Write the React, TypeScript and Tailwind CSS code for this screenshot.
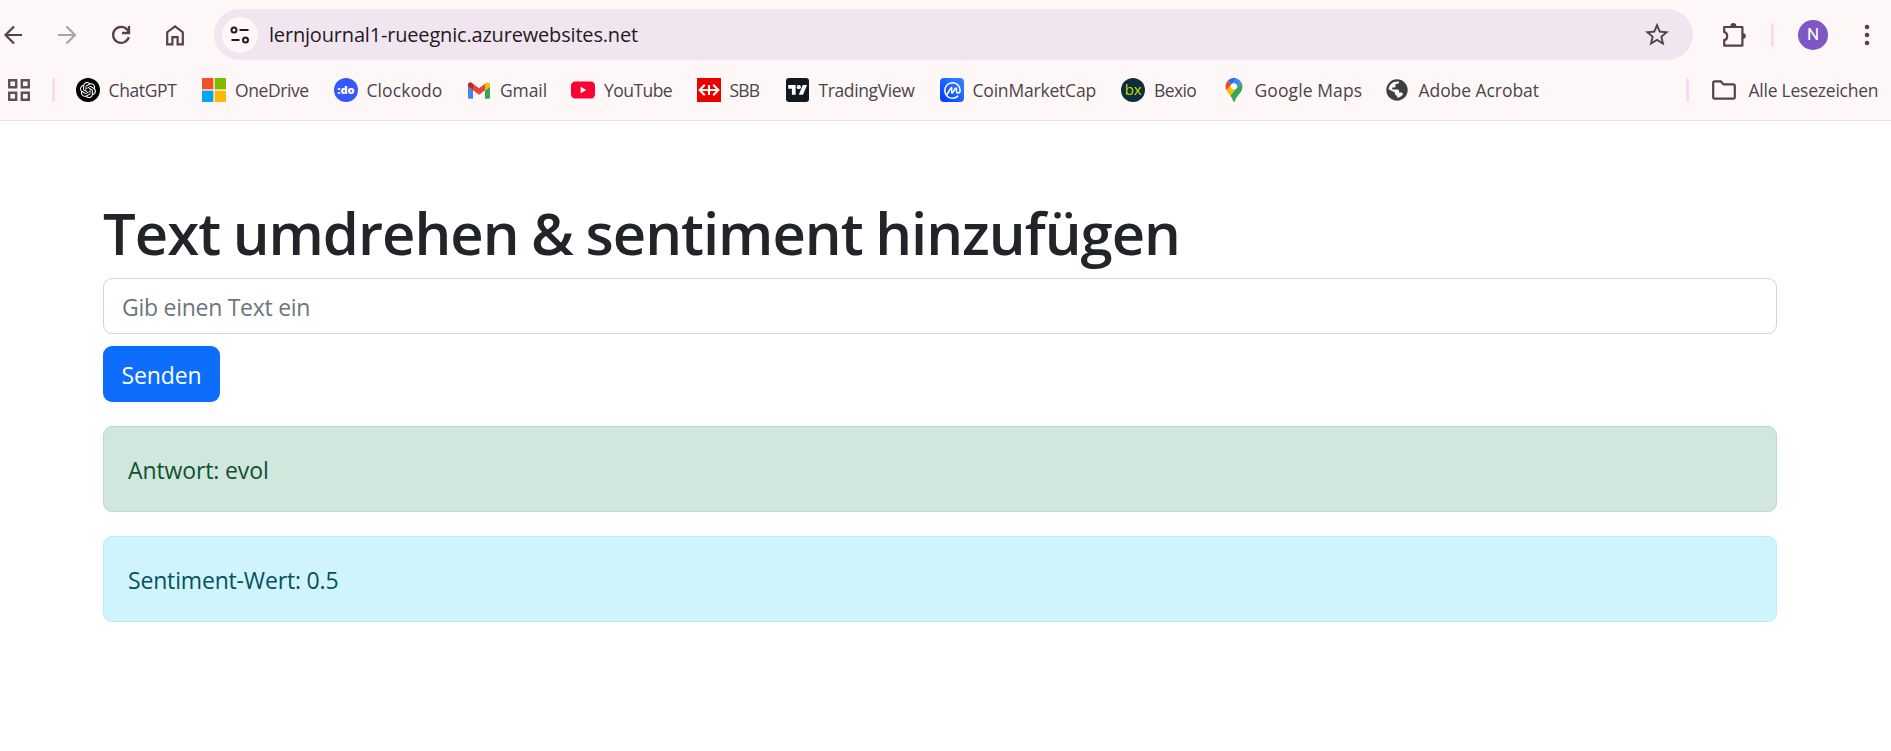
import React from 'react';
import { SiCoinmarketcap, SiOpenai } from 'react-icons/si';

const ChatGptIcon = () => (
  <span className="flex size-6 items-center justify-center rounded-full bg-black text-white">
    <SiOpenai size={16} />
  </span>
);

const MicrosoftIcon = () => (
  <svg width="24" height="24" viewBox="0 0 24 24">
    <rect width="24" height="24" fill="#f6f0e8" />
    <path fill="#f25022" d="M0 0h11.3v11.3H0z" />
    <path fill="#7fba00" d="M12.7 0H24v11.3H12.7z" />
    <path fill="#00a4ef" d="M0 12.7h11.3V24H0z" />
    <path fill="#ffb900" d="M12.7 12.7H24V24H12.7z" />
  </svg>
);

const ClockodoIcon = () => (
  <span className="flex size-6 items-center justify-center rounded-full bg-[#3657fb] pb-px text-[11px] leading-none font-extrabold text-white">
    :do
  </span>
);

const GmailIcon = () => (
  <svg className="ml-px" width="22" height="17" viewBox="52 42 88 66">
    <path fill="#4285f4" d="M58 108h14V74L52 59v43c0 3.32 2.69 6 6 6" />
    <path fill="#34a853" d="M120 108h14c3.32 0 6-2.69 6-6V59l-20 15" />
    <path fill="#fbbc04" d="M120 48v26l20-15v-8c0-7.42-8.47-11.65-14.4-7.2" />
    <path fill="#ea4335" d="M72 74V48l24 18 24-18v26L96 92" />
    <path fill="#c5221f" d="M52 51v8l20 15V48l-5.6-4.2c-5.94-4.45-14.4-.22-14.4 7.2" />
  </svg>
);

const YouTubeIcon = () => (
  <svg width="24" height="24" viewBox="0 0 24 24">
    <rect y="3.6" width="24" height="16.8" rx="4.2" fill="#ff0033" />
    <path d="M9.6 8.8v6.4l5.8-3.2z" fill="#fff" />
  </svg>
);

const SbbIcon = () => (
  <svg width="24" height="24" viewBox="0 0 24 24">
    <rect width="24" height="24" fill="#eb0000" />
    <path
      d="M2.5 12h19M12 7v10M7.8 6.8L2.6 12l5.2 5.2M16.2 6.8l5.2 5.2-5.2 5.2"
      fill="none"
      stroke="#fff"
      strokeWidth="2"
    />
  </svg>
);

const TradingViewIcon = () => (
  <svg width="24" height="24" viewBox="0 0 24 24">
    <rect width="23" height="24" rx="3" fill="#131722" />
    <g fill="#fff" transform="translate(2.2 5) scale(.53)">
      <path d="M14 22H7V11H0V4h14zM28 22h-8l7.5-18h8z" />
      <circle cx="20" cy="8" r="4" />
    </g>
  </svg>
);

const CoinMarketCapIcon = () => (
  <span className="flex size-6 items-center justify-center rounded-[4px] bg-linear-to-tr from-[#0a33ff] to-[#3c86ff] text-white">
    <SiCoinmarketcap size={17} />
  </span>
);

const BexioIcon = () => (
  <span className="flex size-6 items-center justify-center rounded-full bg-[#0d2f3b] pb-px text-[15px] leading-none font-medium tracking-[-0.3px] text-[#bfdc00]">
    bx
  </span>
);

const MapsIcon = () => (
  <svg width="24" height="24" viewBox="-20 0 132.3 132.3">
    <circle cx="46" cy="46" r="20" fill="#fff" />
    <path fill="#1a73e8" d="M60.2 2.2C55.8.8 51 0 46.1 0 32 0 19.3 6.4 10.8 16.5l21.8 18.3L60.2 2.2z" />
    <path fill="#ea4335" d="M10.8 16.5C4.1 24.5 0 34.9 0 46.1c0 8.7 1.7 15.7 4.6 22l28-33.3-21.8-18.3z" />
    <path fill="#4285f4" d="M46.2 28.5c9.8 0 17.7 7.9 17.7 17.7 0 4.3-1.6 8.3-4.2 11.4 0 0 13.9-16.6 27.5-32.7-5.6-10.8-15.3-19-27-22.7L32.6 34.8c3.3-3.8 8.1-6.3 13.6-6.3" />
    <path fill="#fbbc04" d="M46.2 63.8c-9.8 0-17.7-7.9-17.7-17.7 0-4.3 1.5-8.3 4.1-11.3l-28 33.3c4.8 10.6 12.8 19.2 21 29.9l34.1-40.5c-3.3 3.9-8.1 6.3-13.5 6.3" />
    <path fill="#34a853" d="M59.1 109.2c15.4-24.1 33.3-35 33.3-63 0-7.7-1.9-14.9-5.2-21.3L25.6 98c2.6 3.4 5.3 7.3 7.9 11.3 9.4 14.5 6.8 23.1 12.8 23.1s3.4-8.7 12.8-23.2" />
  </svg>
);

const GlobeIcon = () => (
  <svg width="24" height="24" viewBox="0 0 24 24">
    <circle cx="12" cy="12" r="10.7" fill="#3c4043" />
    <path
      fill="#fef7f8"
      d="M14.2 3.8c-.2 1.5-1 2.2-2.2 2.2h-1.5v2c0 1-.6 1.6-1.6 1.6H7.2v1.9h5.3c1 0 1.6.6 1.6 1.6v1.4h1.6c1.3 0 2 .6 2.3 1.9-1.6 1.9-3.6 3.2-5.8 3.4v-2.1c-1.3 0-2.2-.8-2.2-2.1v-1.2L3.5 11.2c.5-4.5 4.1-7.8 8.6-7.8.7 0 1.400.1 2.1.4z"
    />
  </svg>
);

type Bookmark = { label: string; icon: React.ReactNode; box: string; text: string };

const bookmarks: Bookmark[] = [
  { label: 'ChatGPT', icon: <ChatGptIcon />, box: 'w-[126px]', text: 'pl-[8.5px] tracking-[-0.37px]' },
  { label: 'OneDrive', icon: <MicrosoftIcon />, box: 'w-[132px]', text: 'pl-[9px] tracking-[-0.41px]' },
  { label: 'Clockodo', icon: <ClockodoIcon />, box: 'w-[133px]', text: 'pl-[8.5px] tracking-[0.07px]' },
  { label: 'Gmail', icon: <GmailIcon />, box: 'w-[104px]', text: 'pl-[10px] tracking-[-0.1px]' },
  { label: 'YouTube', icon: <YouTubeIcon />, box: 'w-[126px]', text: 'pl-[9px] tracking-[-0.55px]' },
  { label: 'SBB', icon: <SbbIcon />, box: 'w-[89px]', text: 'pl-[8.5px] tracking-[-0.8px]' },
  { label: 'TradingView', icon: <TradingViewIcon />, box: 'w-[154px]', text: 'pl-[8.5px] tracking-[-0.38px]' },
  { label: 'CoinMarketCap', icon: <CoinMarketCapIcon />, box: 'w-[181px]', text: 'pl-[8.5px] tracking-[-0.2px]' },
  { label: 'Bexio', icon: <BexioIcon />, box: 'w-[101px]', text: 'pl-[9px] tracking-[-0.6px]' },
  { label: 'Google Maps', icon: <MapsIcon />, box: 'w-[163px]', text: 'pl-[8.5px] tracking-[0.1px]' },
  { label: 'Adobe Acrobat', icon: <GlobeIcon />, box: 'w-[160px]', text: 'pl-[9.5px] tracking-[-0.06px]' },
];

const Divider = ({ className = '' }: { className?: string }) => (
  <span className={`h-6 w-[3px] shrink-0 rounded-full bg-[#ffd8ee] ${className}`} />
);

function NavIcons() {
  return (
    <div className="flex items-center gap-[30px] text-[#57404a]">
      <svg width="24" height="24" viewBox="0 0 24 24" fill="none" stroke="currentColor" strokeWidth="2.2">
        <path d="M21 12H4.5M13 3.5L4.5 12l8.5 8.5" />
      </svg>
      <svg width="24" height="24" viewBox="0 0 24 24" fill="none" stroke="#aaa3a6" strokeWidth="2.2">
        <path d="M3 12h16.5M11.5 3.5L20 12l-8.5 8.5" />
      </svg>
      <svg width="24" height="24" viewBox="0 0 24 24" fill="none" stroke="currentColor" strokeWidth="2.3">
        <path d="M19.8 14.2A8 8 0 1 1 18.3 6.8L20 9" />
        <path d="M20 3v7h-7" />
      </svg>
      <svg width="24" height="24" viewBox="0 0 24 24" fill="none" stroke="currentColor" strokeWidth="2.2">
        <path d="M4.200 21.400V9.200L12 3.300l7.800 5.900v12.200h-5.200v-7.200H9.400v7.200z" />
      </svg>
    </div>
  );
}

function AddressBar() {
  return (
    <div className="ml-[27px] flex h-[51px] w-[1479px] shrink-0 items-center rounded-full bg-[#f1e5ef] pr-[23px] pl-2">
      <span className="flex size-9 items-center justify-center rounded-full bg-[#fef7f8]">
        <svg width="20" height="20" viewBox="0 0 20 20" fill="none" stroke="#241a20" strokeWidth="2">
          <circle cx="4" cy="5" r="2.5" />
          <path d="M9.5 5h9M1.5 15h8" />
          <circle cx="15.5" cy="15" r="2.5" />
        </svg>
      </span>
      <span className="flex-1 pl-[11px] text-[20px] tracking-[-0.18px] text-[#241a1f]">
        lernjournal1-rueegnic.azurewebsites.net
      </span>
      <svg width="26" height="26" viewBox="0 0 24 24" fill="#50434a">
        <path d="M23 8.740l-7.910-.68L12 .78 8.910 8.070 1 8.740l6 5.200L5.200 21.670 12 17.570l6.800 4.100L17 13.940zM12 15.500l-4.140 2.500 1.100-4.710-3.650-3.160 4.810-.42L12 5.270l1.890 4.450 4.810.42-3.650 3.160 1.100 4.710z" />
      </svg>
    </div>
  );
}

function Toolbar() {
  return (
    <div className="flex h-[60px] items-center pt-[9px] pl-px">
      <NavIcons />
      <AddressBar />
      <svg className="ml-[27px] shrink-0" width="28" height="28" viewBox="0 0 28 28" fill="none" stroke="#57404a" strokeWidth="2.2">
        <path d="M5 6h17.400v18.600H4.200v-5.400c4-.6 4-7.400 0-8.200V6z" strokeLinejoin="round" />
        <path d="M10.400 5.500a3 3.400 0 0 1 6 0zM22.600 12a3.200 3 0 0 1 0 6z" fill="#57404a" stroke="none" />
      </svg>
      <Divider className="ml-[23px]" />
      <span className="ml-6 flex size-[30px] items-center justify-center rounded-full bg-[#7e57c2] font-[Roboto] text-[17px] text-white">
        N
      </span>
      <svg className="ml-[27px]" width="24" height="24" viewBox="0 0 24 24" fill="#57404a">
        <circle cx="12" cy="4" r="2.3" />
        <circle cx="12" cy="12" r="2.3" />
        <circle cx="12" cy="20" r="2.3" />
      </svg>
    </div>
  );
}

function BookmarksBar() {
  return (
    <div className="flex h-[60px] items-center pl-[7px] text-[17.5px] whitespace-nowrap text-[#4d444a]">
      <svg width="24" height="24" viewBox="0 0 24 24" fill="none" stroke="#5b5156" strokeWidth="2.4">
        <path d="M2.200 2.200h7v7h-7zM14.800 2.200h7v7h-7zM2.200 14.800h7v7h-7zM14.800 14.800h7v7h-7z" />
      </svg>
      <Divider className="ml-[21px]" />
      <div className="ml-[21px] flex items-center">
        {bookmarks.map((b) => (
          <div key={b.label} className={`flex shrink-0 items-center ${b.box}`}>
            {b.icon}
            <span className={b.text}>{b.label}</span>
          </div>
        ))}
      </div>
      <Divider className="ml-auto" />
      <svg className="ml-[23px]" width="24" height="24" viewBox="0 0 24 24" fill="none" stroke="#50434a" strokeWidth="2.2">
        <path d="M1.200 19V5q0-1.600 1.600-1.600h6l2.800 3h9.600q1.600 0 1.600 1.600v11q0 1.600-1.600 1.600H2.800Q1.200 20.600 1.200 19z" />
      </svg>
      <span className="ml-[12.5px] w-[142.5px] tracking-[-0.23px]">Alle Lesezeichen</span>
    </div>
  );
}

export default function App() {
  return (
    <div className="min-h-[751px] bg-white font-['Open_Sans',sans-serif]">
      <header className="border-b border-[#f3dbe4] bg-[#fef7f8]">
        <Toolbar />
        <BookmarksBar />
      </header>
      <main className="mx-[103px] w-[1674px] pt-[76px] text-[23px] leading-[36px]">
        <h1 className="mb-[9px] text-[58px] leading-[72px] font-semibold tracking-[-1px] text-[#212529] [word-spacing:-1.5px]">
          Text umdrehen &amp; sentiment hinzufügen
        </h1>
        <input
          placeholder="Gib einen Text ein"
          className="block h-14 w-full rounded-[9px] border border-[#ced4da] px-[18px] pt-0.5 tracking-[-0.27px] outline-none placeholder:text-[#6c757d]"
        />
        <button className="mt-3 flex h-14 w-[117px] items-center rounded-[9px] bg-[#0d6efd] pt-0.5 pl-[18.5px] tracking-[-0.1px] text-white">
          Senden
        </button>
        <div className="mt-6 flex h-[86px] items-center rounded-[9px] border border-[#badbcc] bg-[#d1e7dd] pt-0.5 pl-6 tracking-[-0.12px] text-[#0f5132]">
          Antwort: evol
        </div>
        <div className="mt-6 flex h-[86px] items-center rounded-[9px] border border-[#b6effb] bg-[#cff4fc] pt-0.5 pl-6 tracking-[-0.17px] text-[#055160]">
          Sentiment-Wert: 0.5
        </div>
      </main>
    </div>
  );
}
